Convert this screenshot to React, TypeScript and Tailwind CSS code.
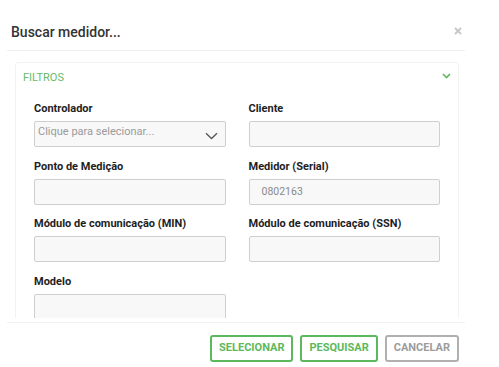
import React from "react";

const campos = [
  { label: "Controlador", tipo: "select" },
  { label: "Cliente" },
  { label: "Ponto de Medição" },
  { label: "Medidor (Serial)", valor: "0802163" },
  { label: "Módulo de comunicação (MIN)" },
  { label: "Módulo de comunicação (SSN)" },
  { label: "Modelo" },
];

function Campo({ label, tipo, valor }: { label: string; tipo?: string; valor?: string }) {
  return (
    <div className="flex flex-col">
      <span className="text-[11px] leading-[14px] font-bold text-[#1e1e1e] mb-[5px]">{label}</span>
      {tipo === "select" ? (
        <div className="h-[26px] border border-[#cfcfcf] rounded-[2px] bg-[#f8f8f8] flex items-start justify-between pl-[3px] pr-[7px]">
          <span className="text-[11px] leading-[17px] text-[#9a9a9a] mt-[1px]">Clique para selecionar...</span>
          <svg width="13" height="8" viewBox="0 0 13 8" className="mt-[10px]">
            <path d="M1 1.2 L6.5 6.5 L12 1.2" fill="none" stroke="#555" strokeWidth="1.3" />
          </svg>
        </div>
      ) : (
        <div className="h-[26px] border border-[#cfcfcf] rounded-[2px] bg-[#f8f8f8] flex items-center pl-[12px]">
          {valor && <span className="text-[10.5px] text-[#8a8a8a]">{valor}</span>}
        </div>
      )}
    </div>
  );
}

export default function App() {
  return (
    <div className="w-[499px] h-[367px] bg-white overflow-hidden font-['Roboto',sans-serif]">
      <div className="ml-[7px] w-[458px]">
        {/* Cabeçalho */}
        <div className="h-[51px] border-b border-[#eeeeee] flex items-start justify-between pt-[22px] pl-[4px] pr-[3px]">
          <h3 className="text-[14px] leading-[20px] font-medium text-[#333]">Buscar medidor...</h3>
          <svg width="8" height="8" viewBox="0 0 8 8" className="mt-[5px]">
            <path d="M1 1 L7 7 M7 1 L1 7" stroke="#c6c6c6" strokeWidth="1.8" />
          </svg>
        </div>

        {/* Corpo com rolagem */}
        <div className="h-[267px] overflow-hidden pt-[11px] pl-[8px] pr-[6px]">
          <div className="border border-[#f2f2f2] rounded-[3px]">
            <div className="flex items-start justify-between pt-[8px] pl-[7px] pr-[7px]">
              <span className="text-[11px] leading-[14px] text-[#66bb6a]">FILTROS</span>
              <svg width="9" height="6" viewBox="0 0 9 6" className="mt-[2px]">
                <path d="M1 1 L4.5 4.5 L8 1" fill="none" stroke="#5cb85c" strokeWidth="1.6" />
              </svg>
            </div>
            <div className="grid grid-cols-2 gap-x-[23px] gap-y-[12.5px] pt-[17px] pl-[18px] pr-[18px] pb-[20px]">
              {campos.map((c) => (
                <Campo key={c.label} label={c.label} tipo={c.tipo} valor={c.valor} />
              ))}
            </div>
          </div>
        </div>

        {/* Rodapé */}
        <div className="mt-[4px] border-t border-[#f2f2f2] flex justify-end gap-[7px] pt-[12px] pr-[6px]">
          <button className="h-[27px] px-[7px] border-2 border-[#5cb85c] rounded-[3px] text-[11px] font-bold text-[#5cb85c]">
            SELECIONAR
          </button>
          <button className="h-[27px] px-[7px] border-2 border-[#5cb85c] rounded-[3px] text-[11px] font-bold text-[#5cb85c]">
            PESQUISAR
          </button>
          <button className="h-[27px] px-[7px] border-2 border-[#b0b0b0] rounded-[3px] text-[11px] font-bold text-[#9c9c9c]">
            CANCELAR
          </button>
        </div>
      </div>
    </div>
  );
}
